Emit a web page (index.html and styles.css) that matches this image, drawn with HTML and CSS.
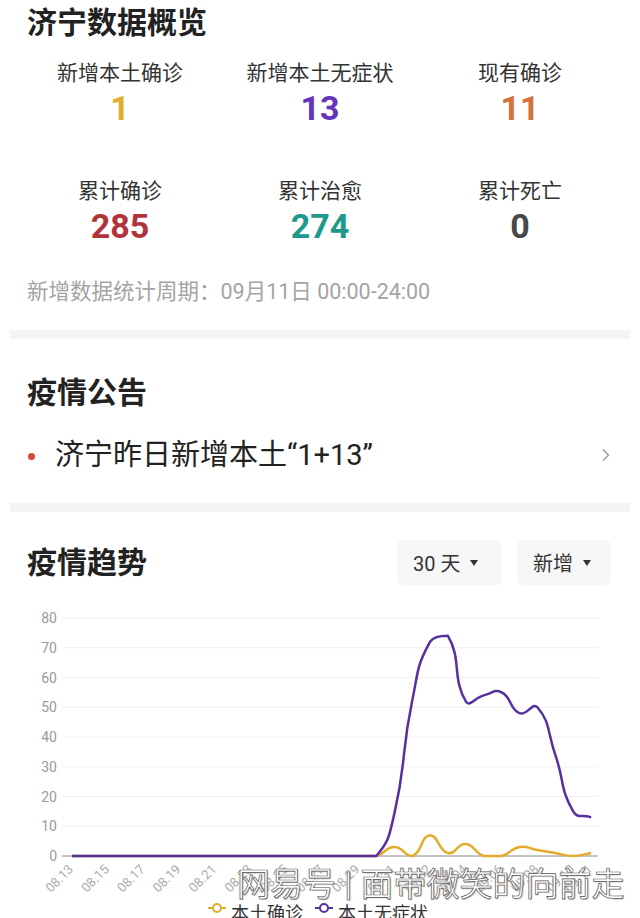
FILE: index.html
```html
<!DOCTYPE html>
<html lang="zh-CN">
<head>
  <meta charset="UTF-8" />
  <meta name="viewport" content="width=device-width, initial-scale=1.0"/>
  <title>济宁疫情数据</title>
  <link rel="stylesheet" href="styles.css">
</head>
<body>

  <div class="page">
    <section class="overview">
      <h1 class="title">济宁数据概览</h1>
      <div class="stats">
        <div class="stat">
          <div class="stat-label">新增本土确诊</div>
          <div class="stat-num yellow">1</div>
        </div>
        <div class="stat">
          <div class="stat-label">新增本土无症状</div>
          <div class="stat-num purple">13</div>
        </div>
        <div class="stat">
          <div class="stat-label">现有确诊</div>
          <div class="stat-num orange">11</div>
        </div>
        <div class="stat">
          <div class="stat-label">累计确诊</div>
          <div class="stat-num red">285</div>
        </div>
        <div class="stat">
          <div class="stat-label">累计治愈</div>
          <div class="stat-num teal">274</div>
        </div>
        <div class="stat">
          <div class="stat-label">累计死亡</div>
          <div class="stat-num gray">0</div>
        </div>
      </div>
      <p class="note">新增数据统计周期：09月11日 00:00-24:00</p>
    </section>

    <div class="divider"></div>

    <section class="notice">
      <h2 class="title">疫情公告</h2>
      <div class="notice-item">
        <span class="dot"></span>
        <span class="notice-text">济宁昨日新增本土“1+13”</span>
        <svg class="chevron" width="8" height="14" viewBox="0 0 8 14">
          <path d="M1 1.5 L6.5 7 L1 12.5" fill="none" stroke="#9a9a9a" stroke-width="1.4"/>
        </svg>
      </div>
    </section>

    <div class="divider"></div>

    <section class="trend">
      <div class="trend-head">
        <h2 class="title">疫情趋势</h2>
        <div class="filters">
          <button class="filter">30 天<i class="caret"></i></button>
          <button class="filter">新增<i class="caret"></i></button>
        </div>
      </div>
      <div class="chart">
        <svg id="chart" width="640" height="318" viewBox="0 0 640 318"></svg>
        <div class="watermark">网易号 | 面带微笑的向前走</div>
      </div>
    </section>
  </div>

  <script>
    const svgNS = "http://www.w3.org/2000/svg";
    const chart = document.getElementById("chart");
    const X0 = 72, DX = 17.9, Y0 = 256, DY = 2.975;

    const zeros = new Array(18).fill(0);
    const confirmed = zeros.concat([3, 0, 7, 1, 4, 0, 0, 3, 2, 1, 0, 1]);
    const asymptomatic = zeros.concat([14, 52, 72, 74, 52, 54, 55, 48, 50, 34, 15, 13]);

    function el(tag, attrs, text) {
      const node = document.createElementNS(svgNS, tag);
      for (const k in attrs) node.setAttribute(k, attrs[k]);
      if (text) node.textContent = text;
      chart.appendChild(node);
      return node;
    }

    // grid + y labels
    for (let k = 0; k <= 8; k++) {
      const y = Y0 - k * 10 * DY;
      if (k > 0) el("line", { x1: 62, x2: 598, y1: y, y2: y, stroke: "#efefef", "stroke-width": 1 });
      el("text", { x: 57, y: y + 5, "text-anchor": "end", class: "axis-y" }, String(k * 10));
    }
    el("line", { x1: 62, x2: 598, y1: Y0, y2: Y0, stroke: "#8a8a8a", "stroke-width": 1 });

    // x labels
    const start = new Date(2022, 7, 13);
    const ticks = [0, 2, 4, 6, 8, 10, 12, 14, 16, 18, 20, 22, 24, 26, 28, 29];
    ticks.forEach(i => {
      const d = new Date(start.getTime() + i * 86400000);
      const label = String(d.getMonth() + 1).padStart(2, "0") + "." + String(d.getDate()).padStart(2, "0");
      const x = X0 + i * DX + 2;
      el("text", { x: x, y: 270, "text-anchor": "end", class: "axis-x", transform: `rotate(-45 ${x} 270)` }, label);
    });

    function smoothPath(values, smooth) {
      const pts = values.map((v, i) => [X0 + i * DX, Y0 - v * DY]);
      const ys = pts.map(p => p[1]);
      const minY = Math.min(...ys), maxY = Math.max(...ys);
      const cps = pts.map((p, i) => {
        const prev = pts[i - 1] || p, next = pts[i + 1] || p;
        const vx = next[0] - prev[0], vy = next[1] - prev[1];
        let d0 = Math.hypot(p[0] - prev[0], p[1] - prev[1]);
        let d1 = Math.hypot(next[0] - p[0], next[1] - p[1]);
        const sum = d0 + d1;
        if (sum) { d0 /= sum; d1 /= sum; }
        const clamp = y => Math.min(maxY, Math.max(minY, y));
        return [
          [p[0] - vx * smooth * d0, clamp(p[1] - vy * smooth * d0)],
          [p[0] + vx * smooth * d1, clamp(p[1] + vy * smooth * d1)]
        ];
      });
      let d = `M${pts[0][0]},${pts[0][1]}`;
      for (let i = 1; i < pts.length; i++) {
        const a = cps[i - 1][1], b = cps[i][0];
        d += ` C${a[0].toFixed(2)},${a[1].toFixed(2)} ${b[0].toFixed(2)},${b[1].toFixed(2)} ${pts[i][0].toFixed(2)},${pts[i][1].toFixed(2)}`;
      }
      return d;
    }

    el("path", { d: smoothPath(confirmed, 0.5), fill: "none", stroke: "#e3ad2b", "stroke-width": 2.5, "stroke-linejoin": "round" });
    el("path", { d: smoothPath(asymptomatic, 0.5), fill: "none", stroke: "#55309e", "stroke-width": 2.5, "stroke-linejoin": "round" });

    // legend (cut by the bottom of the screen)
    el("line", { x1: 208, x2: 226, y1: 308, y2: 308, stroke: "#e3ad2b", "stroke-width": 2 });
    el("circle", { cx: 217, cy: 308, r: 4, fill: "#fff", stroke: "#e3ad2b", "stroke-width": 2 });
    el("text", { x: 231, y: 320, class: "legend" }, "本土确诊");
    el("line", { x1: 315, x2: 333, y1: 308, y2: 308, stroke: "#55309e", "stroke-width": 2 });
    el("circle", { cx: 324, cy: 308, r: 4, fill: "#fff", stroke: "#55309e", "stroke-width": 2 });
    el("text", { x: 338, y: 320, class: "legend" }, "本土无症状");
  </script>

</body>
</html>
```

FILE: styles.css
```css
body {
  margin: 0;
  font-family: Roboto, "Noto Sans CJK SC", sans-serif;
  background-color: #fff;
  color: #222;
  overflow: hidden;
}

.page {
  padding: 0 10px;
}

.title {
  margin: 0;
  font-size: 30px;
  line-height: 36px;
  font-weight: 700;
  color: #222;
}

.overview {
  padding: 5px 17px 25px;
}

.stats {
  display: grid;
  grid-template-columns: repeat(3, 1fr);
  row-gap: 48px;
  margin: 18px -7px 0;
  text-align: center;
}

.stat-label {
  font-size: 21px;
  line-height: 28px;
  color: #333;
}

.stat-num {
  font-size: 34px;
  line-height: 42px;
  font-weight: 700;
}

.yellow { color: #e2ad2c; }
.purple { color: #6434bd; }
.orange { color: #d47038; }
.red { color: #b0343a; }
.teal { color: #1d9a8b; }
.gray { color: #484848; }

.note {
  margin: 32px 0 0;
  font-size: 21.5px;
  line-height: 26px;
  color: #a4a4a4;
}

.divider {
  height: 9px;
  background-color: #f5f5f6;
}

.notice {
  padding: 36px 17px 30px;
}

.notice-item {
  display: flex;
  align-items: center;
  margin-top: 26px;
  height: 36px;
}

.dot {
  width: 7px;
  height: 7px;
  border-radius: 50%;
  background-color: #d9463b;
  margin: 2px 20px 0 1px;
}

.notice-text {
  flex: 1;
  font-size: 29px;
  line-height: 36px;
  color: #222;
}

.chevron {
  margin-right: 3px;
}

.trend {
  padding: 28px 17px 0;
}

.trend-head {
  display: flex;
  align-items: center;
  justify-content: space-between;
  height: 45px;
}

.filters {
  display: flex;
  gap: 15px;
  margin-right: 2px;
}

.filter {
  display: flex;
  align-items: center;
  height: 45px;
  padding: 0 18px 0 16px;
  border: none;
  border-radius: 6px;
  background-color: #f7f7f7;
  font-family: Roboto, "Noto Sans CJK SC", sans-serif;
  font-size: 20px;
  color: #333;
}

.filter:first-child {
  width: 105px;
}

.filter:last-child {
  width: 94px;
}

.caret {
  margin-left: 10px;
  width: 0;
  height: 0;
  border-left: 4.5px solid transparent;
  border-right: 4.5px solid transparent;
  border-top: 6px solid #333;
}

.chart {
  position: relative;
  margin: 15px -27px 0;
  height: 318px;
}

.chart svg {
  display: block;
}

.axis-y {
  font-size: 14px;
  fill: #9a9a9a;
}

.axis-x {
  font-size: 13px;
  fill: #acacac;
}

.legend {
  font-size: 18px;
  fill: #333;
}

.watermark {
  position: absolute;
  left: 237px;
  top: 264px;
  font-size: 33px;
  line-height: 42px;
  white-space: nowrap;
  color: #fff;
  -webkit-text-stroke: 0.7px #555;
  text-shadow: 1px 1px 1px rgba(0, 0, 0, 0.25);
}
```
